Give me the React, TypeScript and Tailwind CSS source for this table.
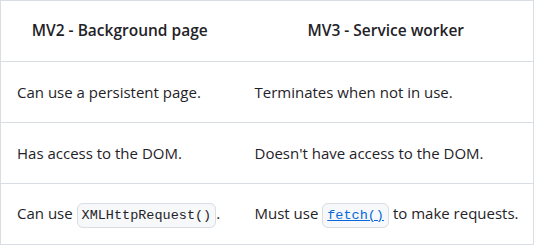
export default function App() {
  const rows = [
    { a: 'Can use a persistent page.', b: 'Terminates when not in use.' },
    { a: 'Has access to the DOM.', b: "Doesn't have access to the DOM." },
  ];

  return (
    <div className="bg-white p-0" style={{ fontFamily: '"Open Sans", "Noto Sans", sans-serif' }}>
      <table className="w-[534px] border-collapse text-[15px] text-[#1f2328]">
        <thead>
          <tr className="h-[61px] border border-[#d8dee4]">
            <th className="w-[238px] text-center text-[15.5px] font-semibold">MV2 - Background page</th>
            <th className="text-center text-[15.5px] font-semibold">MV3 - Service worker</th>
          </tr>
        </thead>
        <tbody>
          {rows.map((r) => (
            <tr key={r.a} className="h-[61px] border border-[#d8dee4]">
              <td className="pl-4">{r.a}</td>
              <td className="pl-4">{r.b}</td>
            </tr>
          ))}
          <tr className="h-[61px] border border-[#d8dee4]">
            <td className="pl-4">
              Can use{' '}
              <code className="rounded-md border border-[#d8dee4] bg-[#f6f8fa] px-1 py-1 text-[13.5px]" style={{ fontFamily: '"Liberation Mono", monospace' }}>
                XMLHttpRequest()
              </code>
              .
            </td>
            <td className="pl-4">
              Must use{' '}
              <code className="rounded-md border border-[#d8dee4] bg-[#f6f8fa] px-1 py-1 text-[13.5px]" style={{ fontFamily: '"Liberation Mono", monospace' }}>
                <a href="#" className="text-[#0969da] underline">fetch()</a>
              </code>{' '}
              to make requests.
            </td>
          </tr>
        </tbody>
      </table>
    </div>
  );
}
